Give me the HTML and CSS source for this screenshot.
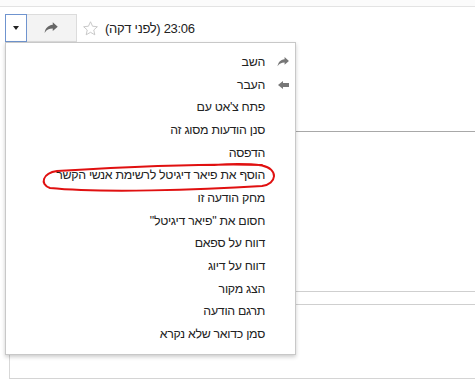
FILE: index.html
```html
<!DOCTYPE html>
<html lang="he">
<head>
<meta charset="utf-8">
<link rel="stylesheet" href="styles.css">
</head>
<body>
<div class="topbar"></div>
<div class="header">
  <div class="btn-dd"><span class="tri"></span></div>
  <div class="btn-reply">
    <svg width="15" height="13" viewBox="0 0 24 20"><path d="M14 4V0l8 7-8 7V10C8 10 4 12 1 17 2 10 6 5 14 4z" fill="#666"/></svg>
  </div>
  <svg class="star" width="17" height="17" viewBox="0 0 24 24"><path d="M12 2.5l2.9 6.3 6.8.7-5.1 4.6 1.5 6.8L12 17.4l-6.1 3.5 1.5-6.8-5.1-4.6 6.8-.7z" fill="none" stroke="#c4c4c4" stroke-width="1.3" stroke-linejoin="round"/></svg>
  <span class="time" dir="rtl">23:06 (לפני דקה)</span>
</div>
<div class="pane">
  <div class="sec sec1"></div>
  <div class="sec sec2"></div>
  <div class="sec sec3"></div>
</div>

<div class="menu" dir="rtl">
  <div class="item"><span class="ico"><svg width="13" height="11" viewBox="0 0 24 20"><path d="M14 4V0l8 7-8 7V10C8 10 4 12 1 17 2 10 6 5 14 4z" fill="#777"/></svg></span>השב</div>
  <div class="item"><span class="ico"><svg width="11" height="8" viewBox="0 0 11 8"><path d="M0 4L5 0V2H11V6H5V8z" fill="#777"/></svg></span>העבר</div>
  <div class="item">פתח צ'אט עם</div>
  <div class="item">סנן הודעות מסוג זה</div>
  <div class="item">הדפסה</div>
  <div class="item">הוסף את פיאר דיגיטל לרשימת אנשי הקשר</div>
  <div class="item">מחק הודעה זו</div>
  <div class="item">חסום את "פיאר דיגיטל"</div>
  <div class="item">דווח על ספאם</div>
  <div class="item">דווח על דיוג</div>
  <div class="item">הצג מקור</div>
  <div class="item">תרגם הודעה</div>
  <div class="item">סמן כדואר שלא נקרא</div>
</div>

<svg class="circle" width="475" height="379" viewBox="0 0 475 379">
  <path d="M262 165 C200 163 110 168 57 171 C43 173 39 184 50 188 C100 193 200 190 262 186 C277 184 279 169 262 165.5 C244 163 228 164 214 165" fill="none" stroke="#e01010" stroke-width="2" stroke-linecap="round"/>
</svg>
</body>
</html>
```

FILE: styles.css
```css
html, body {
  margin: 0;
  padding: 0;
  background: #fff;
  font-family: "Liberation Sans", Arial, sans-serif;
  color: #222;
  width: 475px;
  height: 379px;
  overflow: hidden;
}

.topbar {
  height: 6px;
  border-bottom: 1px solid #e3e3e3;
  background: #fbfbfb;
}

.header {
  display: flex;
  align-items: center;
  margin-top: 7px;
  margin-left: 5px;
  height: 28px;
}

.btn-dd {
  box-sizing: border-box;
  width: 22px;
  height: 28px;
  border: 1px solid #6f94cf;
  background: #fff;
  display: flex;
  align-items: center;
  justify-content: center;
}

.tri {
  width: 0;
  height: 0;
  border-left: 3px solid transparent;
  border-right: 3px solid transparent;
  border-top: 4px solid #222;
}

.btn-reply {
  box-sizing: border-box;
  width: 50px;
  height: 28px;
  background: #f3f3f3;
  border: 1px solid #dcdcdc;
  border-left: none;
  display: flex;
  align-items: center;
  justify-content: center;
}

.star {
  margin-left: 5px;
  margin-right: 6px;
}

.time {
  font-size: 13px;
  letter-spacing: -0.3px;
  color: #222;
}

.pane {
  margin-left: 9px;
  border-left: 1px solid #d8d8d8;
  border-bottom: 1px solid #d4d4d4;
  height: 336px;
}

.sec1 {
  height: 89px;
  border-bottom: 1px solid #a8a8a8;
}

.sec2 {
  height: 159px;
  border-bottom: 1px solid #cfcfcf;
}

.sec3 {
  height: 12px;
  border-bottom: 1px solid #cfcfcf;
}

.menu {
  position: absolute;
  left: 5px;
  top: 42px;
  width: 291px;
  height: 313px;
  box-sizing: border-box;
  background: #fff;
  border: 1px solid #c8c8c8;
  box-shadow: 0 2px 4px rgba(0,0,0,0.2);
  padding-top: 8px;
}

.item {
  position: relative;
  height: 22.67px;
  line-height: 22.67px;
  font-size: 12.4px;
  letter-spacing: -0.3px;
  color: #222;
  padding-right: 30px;
  white-space: nowrap;
}

.ico {
  position: absolute;
  right: 5px;
  top: 0;
  width: 14px;
  height: 22.67px;
  display: flex;
  align-items: center;
  justify-content: center;
}

.circle {
  position: absolute;
  left: 0;
  top: 0;
  pointer-events: none;
}
```
